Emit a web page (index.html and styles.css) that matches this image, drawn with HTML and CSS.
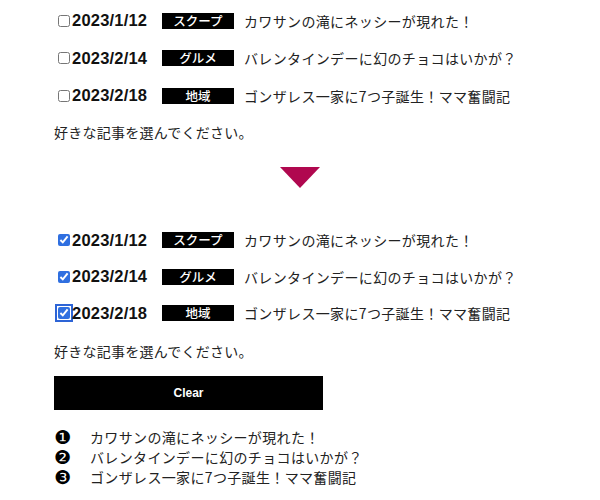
FILE: index.html
```html
<!DOCTYPE html>
<html lang="ja">
<head>
<meta charset="utf-8">
<link rel="stylesheet" href="styles.css">
</head>
<body>
<div class="page">
  <div class="block first">
    <label class="row"><input type="checkbox" class="cb"><span class="date">2023/1/12</span><span class="tag">スクープ</span><span class="title">カワサンの滝にネッシーが現れた！</span></label>
    <label class="row"><input type="checkbox" class="cb"><span class="date">2023/2/14</span><span class="tag">グルメ</span><span class="title">バレンタインデーに幻のチョコはいかが？</span></label>
    <label class="row"><input type="checkbox" class="cb"><span class="date">2023/2/18</span><span class="tag">地域</span><span class="title">ゴンザレス一家に7つ子誕生！ママ奮闘記</span></label>
    <p class="note">好きな記事を選んでください。</p>
  </div>
  <div class="arrow"></div>
  <div class="block second">
    <label class="row"><input type="checkbox" class="cb" checked><span class="date">2023/1/12</span><span class="tag">スクープ</span><span class="title">カワサンの滝にネッシーが現れた！</span></label>
    <label class="row"><input type="checkbox" class="cb" checked><span class="date">2023/2/14</span><span class="tag">グルメ</span><span class="title">バレンタインデーに幻のチョコはいかが？</span></label>
    <label class="row"><input type="checkbox" class="cb focus" checked><span class="date">2023/2/18</span><span class="tag">地域</span><span class="title">ゴンザレス一家に7つ子誕生！ママ奮闘記</span></label>
    <p class="note">好きな記事を選んでください。</p>
    <button class="clear" type="button">Clear</button>
    <ul class="list">
      <li><span class="num">❶</span><span>カワサンの滝にネッシーが現れた！</span></li>
      <li><span class="num">❷</span><span>バレンタインデーに幻のチョコはいかが？</span></li>
      <li><span class="num">❸</span><span>ゴンザレス一家に7つ子誕生！ママ奮闘記</span></li>
    </ul>
  </div>
</div>
</body>
</html>
```

FILE: styles.css
```css
html, body {
  margin: 0;
  padding: 0;
  background: #ffffff;
}
body {
  font-family: "Liberation Sans", "Noto Sans CJK JP", sans-serif;
  color: #111;
  font-size: 14px;
}
.page {
  padding: 2px 54px 0;
  display: flex;
  flex-direction: column;
}
.block {
  display: flex;
  flex-direction: column;
}
.row {
  display: flex;
  align-items: center;
  height: 37.5px;
}
.second .row {
  height: 36.5px;
}
.cb {
  width: 12px;
  height: 12px;
  margin: 0 2px 0 4px;
  accent-color: #2f6fe0;
}
.cb.focus {
  outline: 2px solid #2d64d6;
  outline-offset: 1px;
  border-radius: 3px;
}
.date {
  font-family: "Liberation Sans", sans-serif;
  font-weight: bold;
  font-size: 16.5px;
  letter-spacing: 0.2px;
  color: #111;
  width: 90px;
}
.tag {
  width: 72px;
  height: 16px;
  background: #000;
  color: #fff;
  font-family: "Noto Sans CJK JP", sans-serif;
  font-size: 12.5px;
  font-weight: 500;
  line-height: 16px;
  text-align: center;
  margin-right: 10px;
}
.title {
  font-family: "Noto Sans CJK JP", sans-serif;
  font-size: 14px;
  letter-spacing: 0.35px;
  color: #222;
}
.note {
  margin: 7.5px 0 0;
  line-height: 20px;
  font-family: "Noto Sans CJK JP", sans-serif;
  font-size: 14px;
  letter-spacing: 0.25px;
  color: #222;
}
.arrow {
  align-self: center;
  width: 0;
  height: 0;
  margin-top: 25px;
  border-left: 20px solid transparent;
  border-right: 20px solid transparent;
  border-top: 21px solid #b0084f;
}
.second {
  margin-top: 33.75px;
}
.second .note {
  margin-top: 9.75px;
}
.clear {
  margin-top: 15px;
  width: 269px;
  height: 34px;
  background: #000;
  color: #fff;
  border: none;
  font-family: "Liberation Sans", sans-serif;
  font-weight: bold;
  font-size: 12px;
  padding: 0;
}
.list {
  list-style: none;
  margin: 17px 0 0;
  padding: 0;
}
.list li {
  display: flex;
  align-items: center;
  height: 20px;
  font-family: "Noto Sans CJK JP", sans-serif;
  font-size: 14px;
  letter-spacing: 0.35px;
  color: #222;
}
.num {
  width: 36px;
  font-size: 19px;
  line-height: 14px;
  color: #000;
  font-family: "DejaVu Sans", sans-serif;
  letter-spacing: 0;
}
```
